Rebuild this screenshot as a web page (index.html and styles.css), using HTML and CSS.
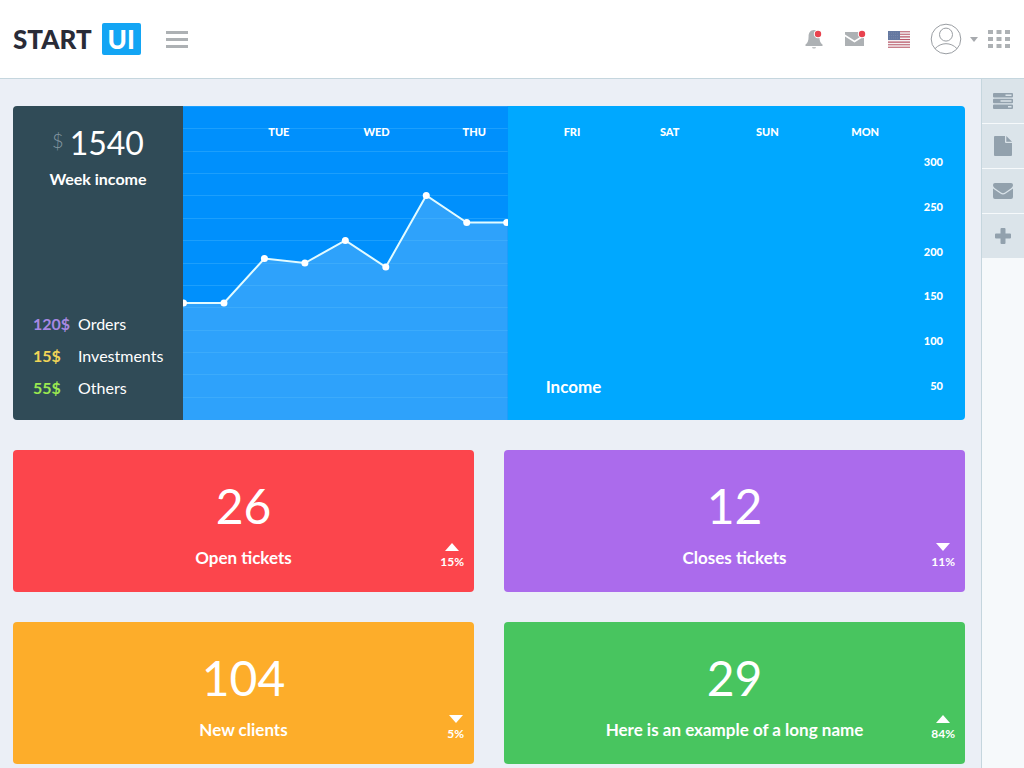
FILE: index.html
```html
<!DOCTYPE html>
<html lang="en">
<head>
<meta charset="utf-8">
<meta name="viewport" content="width=device-width, initial-scale=1">
<title>StartUI Dashboard</title>
<link rel="stylesheet" href="styles.css">
</head>
<body>
<header class="site-header">
  <a class="logo" href="#"><span>START</span><span class="logo-box">UI</span></a>
  <button class="burger" type="button" aria-label="Toggle menu"><span></span><span></span><span></span></button>
  <nav class="header-tools" aria-label="Account">
    <button class="tool tool-bell" type="button" aria-label="Notifications">
      <svg width="18" height="20" viewBox="0 0 18 20"><path d="M9 1C5.300 1 3.600 4 3.600 7.200c0 4.500-.9 6.900-3.100 8.300V17h17v-1.500c-2.200-1.400-3.100-3.800-3.100-8.300C14.400 4 12.700 1 9 1zM7 18.200a2 1.200 0 0 0 4 0z" fill="#adb1b4"/><circle cx="13" cy="5" r="4.200" fill="#fff"/><circle cx="13" cy="5" r="3.200" fill="#e8424e"/></svg>
    </button>
    <button class="tool tool-mail" type="button" aria-label="Messages">
      <svg width="21" height="20" viewBox="0 0 21 20"><path d="M0 5.500V3h19v2.500l-9.500 6zM0 7.500l9.500 6 9.500-6V17H0z" fill="#adb1b4"/><circle cx="17" cy="5" r="4.200" fill="#fff"/><circle cx="17" cy="5" r="3.200" fill="#e8424e"/></svg>
    </button>
    <button class="tool tool-flag" type="button" aria-label="Language">
      <svg width="22" height="17" viewBox="0 0 22 17"><path fill="#f4f0f2" d="M0 0h22v17H0z"/><path d="M0 .7h22M0 3.300h22M0 5.900h22M0 8.500h22M0 11.100h22M0 13.700h22M0 16.300h22" stroke="#b9596a" stroke-width="1.100"/><path fill="#6478a0" d="M0 0h12v9H0z"/><path d="M1 2h10M1 4.500h10M1 7h10" stroke="#7b8aac" stroke-width=".8" stroke-dasharray="1 1"/></svg>
    </button>
    <button class="tool tool-user" type="button" aria-label="Profile">
      <svg width="32" height="32" viewBox="0 0 32 32" fill="none" stroke="#9a9ea3"><circle cx="16" cy="16" r="14.800"/><circle cx="16" cy="11.600" r="6.500"/><path d="M5 25.700C8 22.300 12 20.700 16 20.700s8 1.600 11 5"/></svg>
      <svg width="8" height="5" viewBox="0 0 8 5"><path d="M0 0h8L4 5z" fill="#a7aaae"/></svg>
    </button>
    <button class="tool" type="button" aria-label="Applications">
      <svg width="22" height="18" viewBox="0 0 22 18" fill="#adb1b4"><path d="M0 0h5v4H0zM8.500 0h5v4h-5zM17 0h5v4h-5zM0 7h5v4H0zM8.500 7h5v4h-5zM17 7h5v4h-5zM0 14h5v4H0zM8.500 14h5v4h-5zM17 14h5v4h-5z"/></svg>
    </button>
  </nav>
</header>
<div class="layout">
  <main class="content">
    <section class="income">
      <div class="summary">
        <p class="total"><span class="currency">$</span>1540</p>
        <h2 class="label">Week income</h2>
        <dl class="breakdown">
          <dt class="orders">120$</dt><dd>Orders</dd>
          <dt class="investments">15$</dt><dd>Investments</dd>
          <dt class="others">55$</dt><dd>Others</dd>
        </dl>
      </div>
      <div class="graph">
        <svg class="plot" viewBox="0 0 325 314" preserveAspectRatio="none" role="img" aria-label="Income by day">
          <path d="M0 197H41L81.500 152.500 122 157l40.500-22.500L203 161l40.500-71.500L284 116.500h41V314H0z" fill="#2ea2fb"/>
          <path d="M0 .5h325M0 22.500h325M0 45.500h325M0 67.500h325M0 89.500h325M0 112.500h325M0 134.500h325M0 157.500h325M0 179.500h325M0 201.500h325M0 224.500h325M0 246.500h325M0 268.500h325M0 291.500h325" stroke="#5fc2fc" stroke-opacity=".3"/>
          <path d="M0 197H41L81.500 152.500 122 157l40.500-22.500L203 161l40.500-71.500L284 116.500h41" fill="none" stroke="#e2fbff" stroke-width="2"/>
          <g fill="#fff"><circle cx=".5" cy="197" r="3.500"/><circle cx="41" cy="197" r="3.500"/><circle cx="81.500" cy="152.500" r="3.500"/><circle cx="122" cy="157" r="3.500"/><circle cx="162.500" cy="134.500" r="3.500"/><circle cx="203" cy="161" r="3.500"/><circle cx="243.500" cy="89.500" r="3.500"/><circle cx="284" cy="116.500" r="3.500"/><circle cx="324" cy="116.500" r="3.500"/></g>
        </svg>
        <ul class="days"><li>TUE</li><li>WED</li><li>THU</li><li>FRI</li><li>SAT</li><li>SUN</li><li>MON</li></ul>
        <p class="caption">Income</p>
        <ul class="scale"><li>300</li><li>250</li><li>200</li><li>150</li><li>100</li><li>50</li></ul>
      </div>
    </section>
    <section class="cards">
      <article class="card red">
        <p class="number">26</p><h2 class="label">Open tickets</h2>
        <p class="change"><span class="arrow up"></span>15%</p>
      </article>
      <article class="card purple">
        <p class="number">12</p><h2 class="label">Closes tickets</h2>
        <p class="change"><span class="arrow down"></span>11%</p>
      </article>
      <article class="card yellow">
        <p class="number">104</p><h2 class="label">New clients</h2>
        <p class="change"><span class="arrow down"></span>5%</p>
      </article>
      <article class="card green">
        <p class="number">29</p><h2 class="label">Here is an example of a long name</h2>
        <p class="change"><span class="arrow up"></span>84%</p>
      </article>
    </section>
  </main>
  <aside class="side-panel">
    <button type="button" aria-label="Tasks"><svg width="20" height="16" viewBox="0 0 20 16"><path fill-rule="evenodd" d="M1 0h18a1 1 0 0 1 1 1v2.500a1 1 0 0 1-1 1H1a1 1 0 0 1-1-1V1a1 1 0 0 1 1-1zM12.500 1.500v1.500h6V1.500zM1 5.700h18a1 1 0 0 1 1 1v2.600a1 1 0 0 1-1 1H1a1 1 0 0 1-1-1V6.700a1 1 0 0 1 1-1zM7.500 7.200v1.500h11V7.200zM1 11.500h18a1 1 0 0 1 1 1V15a1 1 0 0 1-1 1H1a1 1 0 0 1-1-1v-2.500a1 1 0 0 1 1-1zM15 13v1.500h3.500V13z" fill="#92a1ad"/></svg></button>
    <button type="button" aria-label="Files"><svg width="18" height="20" viewBox="0 0 18 20"><path d="M1 0h10v6a1 1 0 0 0 1 1h6v12a1 1 0 0 1-1 1H1a1 1 0 0 1-1-1V1a1 1 0 0 1 1-1zM12.300 0L18 5.700h-5.700z" fill="#92a1ad"/></svg></button>
    <button type="button" aria-label="Mail"><svg width="20" height="16" viewBox="0 0 20 16"><path d="M2 0h16a2 2 0 0 1 2 2c0 1.500-1 2.600-2.200 3.500L12 9.500c-1.300.9-2.700.9-4 0L2.200 5.500C1 4.600 0 3.500 0 2a2 2 0 0 1 2-2zM0 5.400l7.300 5.200c1.800 1.200 3.600 1.200 5.400 0L20 5.400V14a2 2 0 0 1-2 2H2a2 2 0 0 1-2-2z" fill="#92a1ad"/></svg></button>
    <button type="button" aria-label="Add"><svg width="16" height="16" viewBox="0 0 16 16"><path d="M6.500 0h3a1 1 0 0 1 1 1v4.500H15a1 1 0 0 1 1 1v3a1 1 0 0 1-1 1h-4.500V15a1 1 0 0 1-1 1h-3a1 1 0 0 1-1-1v-4.500H1a1 1 0 0 1-1-1v-3a1 1 0 0 1 1-1h4.500V1a1 1 0 0 1 1-1z" fill="#92a1ad"/></svg></button>
  </aside>
</div>
</body>
</html>
```
FILE: styles.css
```css
* { box-sizing: border-box; }
body {
  margin: 0;
  min-height: 100vh;
  display: flex;
  flex-direction: column;
  background: #ebeff6;
  color: #fff;
  font: 16px/20px Lato, "Open Sans", sans-serif;
}
p, h2, ul, dl, dd { margin: 0; padding: 0; }
ul { list-style: none; }
svg { display: block; }
button {
  padding: 0;
  border: 0;
  background: none;
  cursor: pointer;
}
.site-header {
  display: flex;
  align-items: center;
  min-height: 79px;
  padding: 0 14px 0 13px;
  background: #fff;
  border-bottom: 1px solid #c5d6de;
}
.logo {
  display: flex;
  align-items: center;
  gap: 10px;
  color: #292b37;
  font-size: 26px;
  line-height: 32px;
  font-weight: 900;
  text-decoration: none;
}
.logo-box {
  padding: 0 6px;
  border-radius: 2px;
  background: #13a5f4;
  color: #fff;
}
.burger {
  display: grid;
  gap: 4px;
  width: 22px;
  margin-left: 25px;
}
.burger span { height: 3px; background: #adb1b4; }
.header-tools {
  display: flex;
  align-items: center;
  margin-left: auto;
}
.tool-bell { margin-right: 22px; }
.tool-mail { margin-right: 22px; }
.tool-flag { margin-right: 20px; }
.tool-user {
  display: flex;
  align-items: center;
  gap: 8px;
  margin-right: 10px;
}
.layout { display: flex; flex: 1; }
.content { flex: 1; min-width: 0; padding: 27px 16px 4px 13px; }
.side-panel {
  display: flex;
  flex-direction: column;
  gap: 1px;
  width: 43px;
  border-left: 1px solid #c5d6de;
  background: #f6f9fb;
}
.side-panel button {
  display: grid;
  place-items: center;
  height: 44px;
  background: #dbe4ea;
}
.income {
  display: flex;
  height: 314px;
  margin-bottom: 30px;
  border-radius: 4px;
  overflow: hidden;
}
.summary {
  display: flex;
  flex-direction: column;
  width: 170px;
  padding: 17px 8px 22px 20px;
  background: #304b57;
}
.total {
  display: flex;
  justify-content: center;
  gap: 6px;
  padding-right: 12px;
  font-size: 32px;
  line-height: 40px;
}
.currency {
  color: #8397a1;
  font-size: 20px;
  line-height: 34px;
  font-weight: 300;
}
.label { font-size: 17px; line-height: 20px; font-weight: 700; text-align: center; }
.summary .label { margin-top: 6px; padding-right: 12px; font-size: 16px; }
.breakdown {
  display: grid;
  grid-template-columns: 45px 1fr;
  row-gap: 12px;
  margin-top: auto;
}
.breakdown dt { font-weight: 700; }
.orders { color: #a788e3; }
.investments { color: #f0d557; }
.others { color: #9be850; }
.graph {
  flex: 1;
  display: grid;
  grid-template-columns: 71fr 100fr;
  grid-template-rows: 46px 1fr;
  background: #00a8ff;
}
.plot {
  grid-area: 1 / 1 / 3 / 2;
  width: 100%;
  height: 314px;
  background: #0090fc;
}
.days {
  grid-area: 1 / 1 / 2 / 3;
  display: grid;
  grid-template-columns: repeat(7, 1fr);
  padding: 16px 51px 0 47px;
  font-size: 11px;
  font-weight: 900;
  text-align: center;
}
.caption {
  grid-area: 2 / 2;
  align-self: end;
  padding: 0 38px 23px;
  font-size: 17px;
  font-weight: 700;
}
.scale {
  grid-area: 2 / 2;
  justify-self: end;
  display: flex;
  flex-direction: column;
  justify-content: space-between;
  padding: 0 22px 24px;
  font-size: 11px;
  font-weight: 900;
  text-align: right;
}
.cards {
  display: grid;
  grid-template-columns: repeat(2, 1fr);
  gap: 30px;
}
.card {
  position: relative;
  min-height: 142px;
  padding: 26px 10px 22px;
  border-radius: 4px;
  text-align: center;
}
.red { background: #fc454c; }
.purple { background: #ab6bec; }
.yellow { background: #fdad2a; }
.green { background: #48c55f; }
.number { margin-bottom: 12px; font-size: 48px; line-height: 60px; }
.change {
  position: absolute;
  right: 10px;
  bottom: 22px;
  display: grid;
  justify-items: center;
  font-size: 12px;
  line-height: 16px;
  font-weight: 700;
}
.arrow {
  border: solid transparent;
  border-width: 0 7px;
  margin-bottom: 3px;
}
.up { border-bottom: 8px solid #fff; }
.down { border-top: 8px solid #fff; }
```
